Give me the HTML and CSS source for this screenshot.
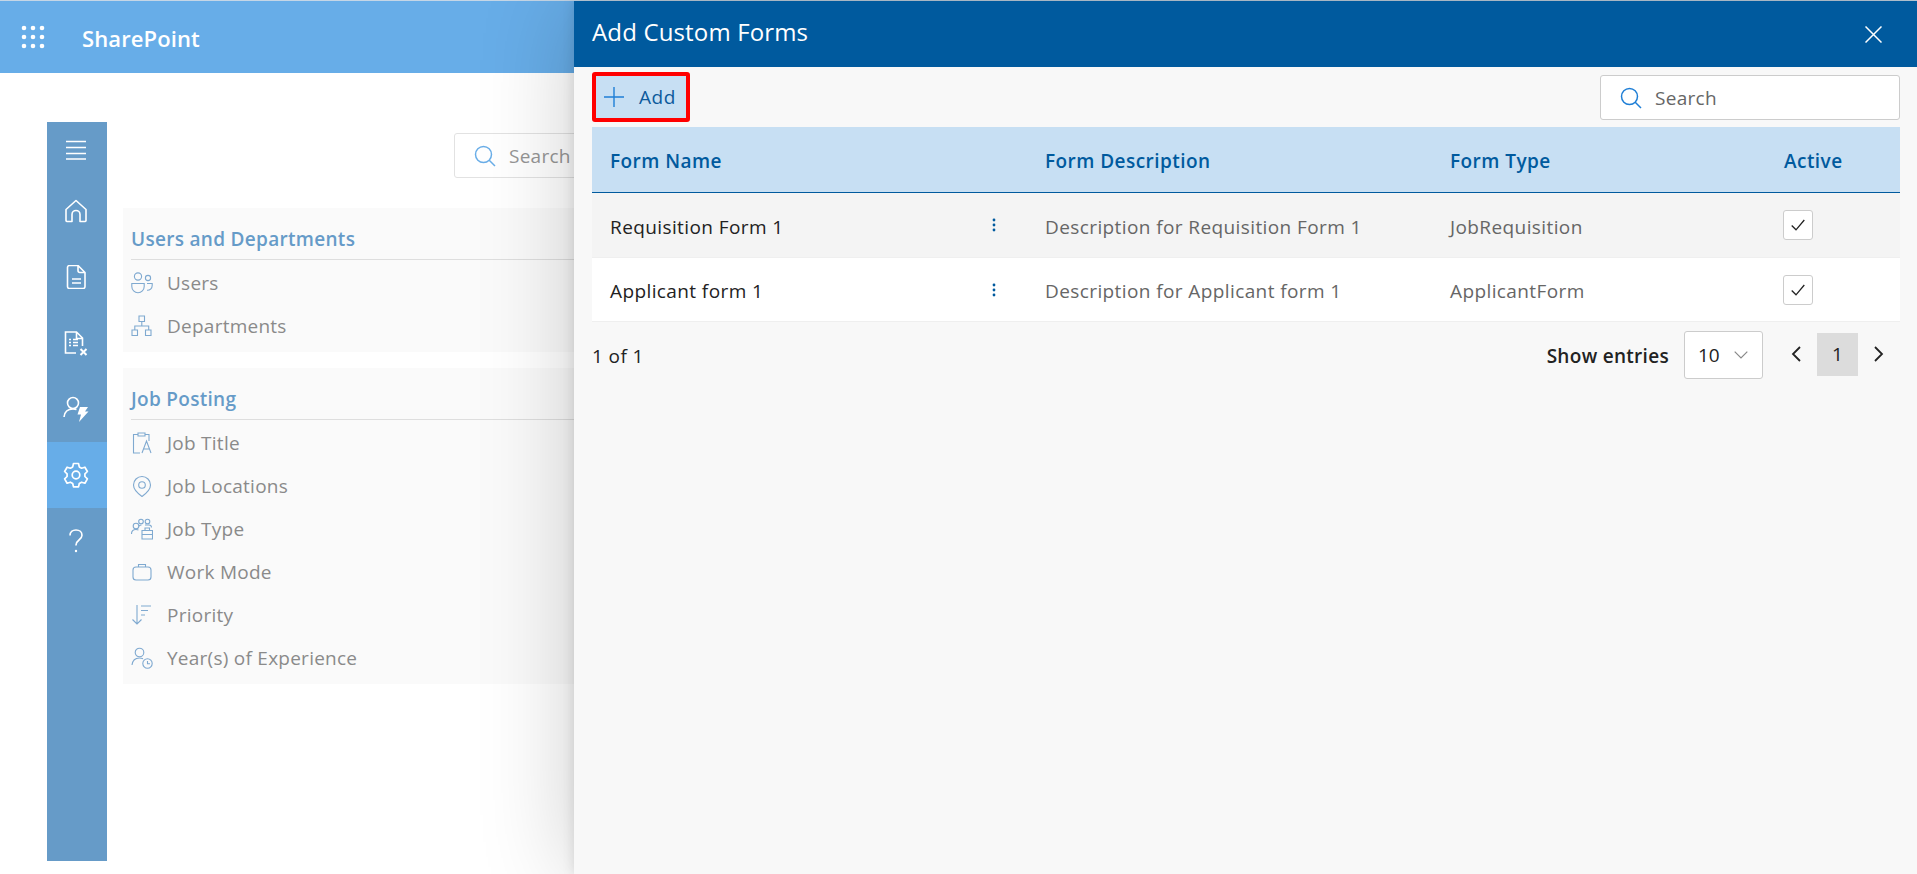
FILE: index.html
```html
<!doctype html>
<html lang="en">
<head>
<meta charset="UTF-8">
<title>Add Custom Forms</title>
<link rel="stylesheet" href="styles.css">
</head>
<body>
	<!--top bar-->
	<header class="topbar">
		<svg class="waffle" width="24" height="24" viewBox="0 0 24 24" fill="#fff">
			<circle cx="3" cy="3" r="2.3"/><circle cx="12" cy="3" r="2.3"/><circle cx="21" cy="3" r="2.3"/>
			<circle cx="3" cy="12" r="2.3"/><circle cx="12" cy="12" r="2.3"/><circle cx="21" cy="12" r="2.3"/>
			<circle cx="3" cy="21" r="2.3"/><circle cx="12" cy="21" r="2.3"/><circle cx="21" cy="21" r="2.3"/>
		</svg>
		<span class="brand">SharePoint</span>
		<div class="top-search"></div>
	</header>

	<div class="main">
		<!--left rail-->
		<nav class="rail">
			<div class="rail-item rail-menu">
				<svg width="22" height="22" viewBox="0 0 22 22" fill="none" stroke="#fff" stroke-width="1.5"><path d="M1 2.5h20M1 8.5h20M1 14.5h20M1 20h20"/></svg>
			</div>
			<div class="rail-item">
				<svg width="24" height="24" viewBox="0 0 24 24" fill="none" stroke="#fff" stroke-width="1.6" stroke-linejoin="round"><path d="M2 21.5V10.5L12 1.5l10 9v11a1.2 1.2 0 0 1-1.2 1H16v-7a4 4 0 0 0-8 0v7H3.2A1.2 1.2 0 0 1 2 21.500z"/></svg>
			</div>
			<div class="rail-item">
				<svg width="24" height="24" viewBox="0 0 24 24" fill="none" stroke="#fff" stroke-width="1.6" stroke-linejoin="round"><path d="M3.500 2.500a2 2 0 0 1 2-2H14l7 7v14a2 2 0 0 1-2 2H5.500a2 2 0 0 1-2-2zM14 .5v5a2 2 0 0 0 2 2h5M8 14h9M8 18h9"/></svg>
			</div>
			<div class="rail-item">
				<svg width="26" height="26" viewBox="0 0 26 26" fill="none" stroke="#fff" stroke-width="1.6"><path d="M13 23H2.500V2h11l6 6v8M13.500 2v6.500h6"/><path d="M6 9.500h2M10 9.500h5M6 12.500h2M10 12.500h5M6 15.500h2M10 15.500h5"/><path stroke-width="2" d="M17.500 19l6 6M23.500 19l-6 6"/></svg>
			</div>
			<div class="rail-item">
				<svg width="26" height="26" viewBox="0 0 26 26" fill="none" stroke="#fff" stroke-width="1.6"><circle cx="10" cy="7" r="5.500"/><path d="M1 21c.5-5 3.500-8 9-8 1.500 0 2.500.2 3.500.6"/><path fill="#fff" stroke="none" d="M17 11h8l-3 4.500h3.500L16 26l2-7.500h-3.500z"/></svg>
			</div>
			<div class="rail-item rail-active">
				<svg width="26" height="26" viewBox="0 0 26 26" fill="none" stroke="#fff" stroke-width="1.7" stroke-linejoin="round"><circle cx="13" cy="13" r="3.800"/><path d="M10.500 1.500h5l.8 3.400 2.300 1.300 3.300-1 2.500 4.300-2.500 2.400v2.600l2.500 2.400-2.500 4.300-3.300-1-2.300 1.300-.8 3.400h-5l-.8-3.400-2.300-1.300-3.300 1-2.500-4.300 2.500-2.400v-2.600L1.600 9.500l2.500-4.300 3.300 1 2.300-1.300z"/></svg>
			</div>
			<div class="rail-item">
				<svg width="14" height="24" viewBox="0 0 14 24" fill="none" stroke="#fff" stroke-width="1.6"><path d="M1 6.500C1 3 3.500 1 7 1s6 2.200 6 5.200c0 2.300-1.300 3.500-3 4.800-1.800 1.400-3 2.400-3 5v.5"/><circle cx="7" cy="22" r="1.200" fill="#fff" stroke="none"/></svg>
			</div>
		</nav>

		<!--settings list behind the panel-->
		<section class="content">
			<div class="page-search">
				<svg width="22" height="22" viewBox="0 0 22 22" fill="none" stroke="#6aaee8" stroke-width="1.5"><circle cx="9.500" cy="9.500" r="8"/><path d="M15 15l6 6"/></svg>
				<span>Search</span>
			</div>

			<div class="group">
				<div class="group-title">Users and Departments</div>
				<div class="group-row">
					<svg class="row-icon" viewBox="0 0 22 22"><circle cx="7" cy="4.500" r="3.600"/><circle cx="17" cy="6" r="2.600"/><path d="M.8 11.500h12.400v3a6.200 6.200 0 0 1-12.400 0zM16 11.500h5.200v2a4.800 4.800 0 0 1-5.200 4.800"/></svg>
					<span>Users</span>
				</div>
				<div class="group-row">
					<svg class="row-icon" viewBox="0 0 22 22"><path d="M8 1h5.500v5.500H8zM1 15h5.500v5.500H1zM14.500 15H20v5.500h-5.500zM10.800 6.500V11M3.800 15v-4h13.900v4"/></svg>
					<span>Departments</span>
				</div>
			</div>

			<div class="group">
				<div class="group-title">Job Posting</div>
				<div class="group-row">
					<svg class="row-icon" viewBox="0 0 22 22"><path d="M14.500 2.500H18V9M7 2.500H2.500V21H9M7 1h7v3H7zM11 21l4.500-12 4.500 12M12.500 17h6"/></svg>
					<span>Job Title</span>
				</div>
				<div class="group-row">
					<svg class="row-icon" viewBox="0 0 22 22"><path d="M11 21.500C5.500 17.500 2.500 14 2.500 10a8.500 8.500 0 0 1 17 0c0 4-3 7.500-8.500 11.500z"/><circle cx="11" cy="10" r="3.300"/></svg>
					<span>Job Locations</span>
				</div>
				<div class="group-row">
					<svg class="row-icon" viewBox="0 0 22 22"><circle cx="5" cy="8" r="2.800"/><circle cx="10" cy="3.500" r="2.300"/><circle cx="16.500" cy="3.500" r="2.300"/><path d="M.5 16c0-3 1.500-4.500 4.500-4.500 1 0 2 .2 2.500.6M8 8c.5-.5 1.500-1 2.500-1M14 7h4c1.500 0 2.500 1 2.500 2.500M11 12.500h10.500V21H11zM14 12.500V10h4.500v2.500M11 16.500h10.500"/></svg>
					<span>Job Type</span>
				</div>
				<div class="group-row">
					<svg class="row-icon" viewBox="0 0 22 22"><rect x="2" y="6" width="18" height="13" rx="3"/><path d="M7.500 6V3.500h7V6"/></svg>
					<span>Work Mode</span>
				</div>
				<div class="group-row">
					<svg class="row-icon" viewBox="0 0 22 22"><path d="M6 1v19M1.500 15.500L6 20l4.500-4.500M10 2h10M10 6.500h7M10 11h4"/></svg>
					<span>Priority</span>
				</div>
				<div class="group-row">
					<svg class="row-icon" viewBox="0 0 22 22"><circle cx="8.500" cy="5.500" r="4.300"/><path d="M1 18c.5-4.500 3-7 7.500-7 1.500 0 2.500.3 3.500.8"/><circle cx="16.500" cy="16.500" r="4.700"/><path d="M16.500 14v2.700h2.500"/></svg>
					<span>Year(s) of Experience</span>
				</div>
			</div>
		</section>
	</div>

	<!--side panel-->
	<aside class="panel">
		<div class="panel-head">
			<h1>Add Custom Forms</h1>
			<svg width="17" height="17" viewBox="0 0 17 17" fill="none" stroke="#fff" stroke-width="1.500"><path d="M.5.5l16 16M16.500.5l-16 16"/></svg>
		</div>

		<div class="panel-tools">
			<button class="add-btn">
				<svg width="20" height="20" viewBox="0 0 20 20" fill="none" stroke="#1f7fd6" stroke-width="1.400"><path d="M10 0v20M0 10h20"/></svg>
				<span>Add</span>
			</button>
			<div class="search-box">
				<svg width="22" height="22" viewBox="0 0 22 22" fill="none" stroke="#1f7fd6" stroke-width="1.500"><circle cx="9.500" cy="9.500" r="8"/><path d="M15 15l6 6"/></svg>
				<span>Search</span>
			</div>
		</div>

		<div class="grid-head grid-row">
			<div>Form Name</div>
			<div>Form Description</div>
			<div>Form Type</div>
			<div>Active</div>
		</div>
		<div class="grid-row grid-line line-odd">
			<div class="cell-name"><span>Requisition Form 1</span>
				<svg width="4" height="14" viewBox="0 0 4 14" fill="#005a9e"><circle cx="2" cy="2" r="1.400"/><circle cx="2" cy="7" r="1.400"/><circle cx="2" cy="12" r="1.400"/></svg>
			</div>
			<div class="cell-text">Description for Requisition Form 1</div>
			<div class="cell-text">JobRequisition</div>
			<div class="cell-check"><span class="check"><svg width="14" height="12" viewBox="0 0 14 12" fill="none" stroke="#222" stroke-width="1.300"><path d="M.7 6.500L5 10.800 13.300 1"/></svg></span></div>
		</div>
		<div class="grid-row grid-line">
			<div class="cell-name"><span>Applicant form 1</span>
				<svg width="4" height="14" viewBox="0 0 4 14" fill="#005a9e"><circle cx="2" cy="2" r="1.400"/><circle cx="2" cy="7" r="1.400"/><circle cx="2" cy="12" r="1.400"/></svg>
			</div>
			<div class="cell-text">Description for Applicant form 1</div>
			<div class="cell-text">ApplicantForm</div>
			<div class="cell-check"><span class="check"><svg width="14" height="12" viewBox="0 0 14 12" fill="none" stroke="#222" stroke-width="1.300"><path d="M.7 6.500L5 10.800 13.300 1"/></svg></span></div>
		</div>

		<div class="pager">
			<span class="pager-count">1 of 1</span>
			<span class="pager-label">Show entries</span>
			<div class="pager-select">
				<span>10</span>
				<svg width="14" height="8" viewBox="0 0 14 8" fill="none" stroke="#888" stroke-width="1.200"><path d="M.7.7L7 7l6.300-6.300"/></svg>
			</div>
			<svg class="pager-prev" width="10" height="16" viewBox="0 0 10 16" fill="none" stroke="#222" stroke-width="1.800"><path d="M9 1L2 8l7 7"/></svg>
			<span class="pager-num">1</span>
			<svg class="pager-next" width="10" height="16" viewBox="0 0 10 16" fill="none" stroke="#222" stroke-width="1.800"><path d="M1 1l7 7-7 7"/></svg>
		</div>
	</aside>
</body>
</html>
```
FILE: styles.css
```css
html,body{
	margin:0; padding:0; height:100%; overflow:hidden; background:#fff;
	font-family:"Open Sans","Noto Sans",sans-serif; font-size:19px;
}

/*top bar*/
.topbar{
	height:72px; border-top:1px solid #c5d6e6; background:#67ade8; display:flex; align-items:center; padding-left:21px;
}
.waffle{ flex:none; }
.brand{ margin-left:37px; padding-top:2px; color:#fff; font-size:22px; font-weight:600; letter-spacing:.1px; }
.top-search{ width:300px; height:43px; margin-left:395px; background:#eef3f8; border-radius:2px; }

/*layout under the bar*/
.main{ display:flex; padding:49px 0 0 47px; }
.rail{ width:60px; height:739px; background:#669bc8; flex:none; }
.rail-item{ height:66px; display:flex; align-items:center; justify-content:center; padding-right:2px; }
.rail-menu{ height:56px; }
.rail-active{ background:#67ade8; }

.content{ margin-left:16px; padding-top:11px; width:1780px; flex:none; }
.page-search{
	width:300px; height:43px; margin:0 0 30px 331px; border:1px solid #e2e2e2; border-radius:3px;
	display:flex; align-items:center; gap:13px; padding-left:19px; color:#969696; letter-spacing:.25px;
}
.group{ background:#fafafa; padding:0 0 5px 8px; margin-bottom:16px; }
.group-title{
	height:51px; line-height:63px; border-bottom:1px solid #dedede;
	color:#669bc8; font-size:19px; font-weight:600; letter-spacing:.3px;
}
.group-row{ height:43px; display:flex; align-items:center; color:#8a8a8a; letter-spacing:.25px; }
.group-title + .group-row{ margin-top:1px; }
.row-icon{
	width:22px; height:22px; margin-right:14px; flex:none;
	fill:none; stroke:#7fa9d0; stroke-width:1.100;
}

/*panel over the page*/
.panel{
	position:absolute; top:1px; left:574px; right:0; bottom:0; background:#f8f8f8;
	box-shadow:0 0 12px rgba(0,0,0,.12), 0 0 90px rgba(0,0,0,.2);
}
.panel-head{
	height:66px; background:#005a9e; color:#fff; display:flex; align-items:center; justify-content:space-between; padding:0 35px 0 18px;
}
.panel-head h1{ margin:0 0 5px; font-size:24px; font-weight:400; letter-spacing:.15px; }
.panel-tools{ height:60px; display:flex; justify-content:space-between; padding:0 17px 0 18px; }
.add-btn{
	width:98px; height:50px; margin-top:5px; box-sizing:border-box; border:4.500px solid #f00; border-radius:3px; background:#c7dff3;
	display:flex; align-items:center; padding:0 0 0 8px; gap:15px; color:#0d5a9c; font:inherit; letter-spacing:.6px;
}
.search-box{
	width:300px; height:45px; box-sizing:border-box; margin-top:8px; background:#fff; border:1px solid #ccc; border-radius:3px;
	display:flex; align-items:center; gap:13px; padding-left:19px; color:#666; letter-spacing:.3px;
}

/*forms grid*/
.grid-row{
	display:grid; grid-template-columns:435px 405px 333px 135px; margin:0 17px 0 18px; align-items:center;
}
.grid-row > div{ padding-left:18px; }
.grid-row > .cell-check{ padding-left:19px; }
.grid-head{
	height:65px; background:#c7dff3; border-bottom:1px solid #005a9e; color:#005a9e; font-weight:600; letter-spacing:.45px;
}
.grid-head > div{ padding-top:3px; }
.grid-head > div:last-child{ padding-left:19px; }
.grid-line{ height:63px; background:#fff; border-bottom:1px solid #efefef; color:#666; letter-spacing:.4px; }
.line-odd{ background:#f4f4f4; height:64px; }
.cell-text{ padding-top:3px; }
.cell-name{ display:flex; align-items:center; justify-content:space-between; padding-right:31px; color:#222; letter-spacing:.4px; }
.cell-name span{ padding-top:3px; }
.check{
	width:28px; height:28px; display:flex; align-items:center; justify-content:center; margin-left:-1px;
	background:#fff; border:1px solid #ccc; border-radius:3px;
}

/*pager*/
.pager{ display:flex; align-items:center; height:64px; padding:0 33px 0 18px; color:#222; }
.pager-count{ margin-right:auto; padding-top:3px; letter-spacing:.4px; }
.pager-label{ font-weight:600; letter-spacing:.3px; margin-right:15px; padding-top:3px; }
.pager-select{
	width:77px; height:46px; margin-top:2px; background:#fff; border:1px solid #ccc; border-radius:3px;
	display:flex; align-items:center; justify-content:space-between;
}
.pager-select span{ margin-left:13px; }
.pager-select svg{ margin-right:14px; }
.pager-prev{ margin-left:28px; }
.pager-num{
	width:41px; height:43px; margin-left:16px; background:#dcdcdc; display:flex; align-items:center; justify-content:center;
}
.pager-next{ margin-left:16px; }
```
